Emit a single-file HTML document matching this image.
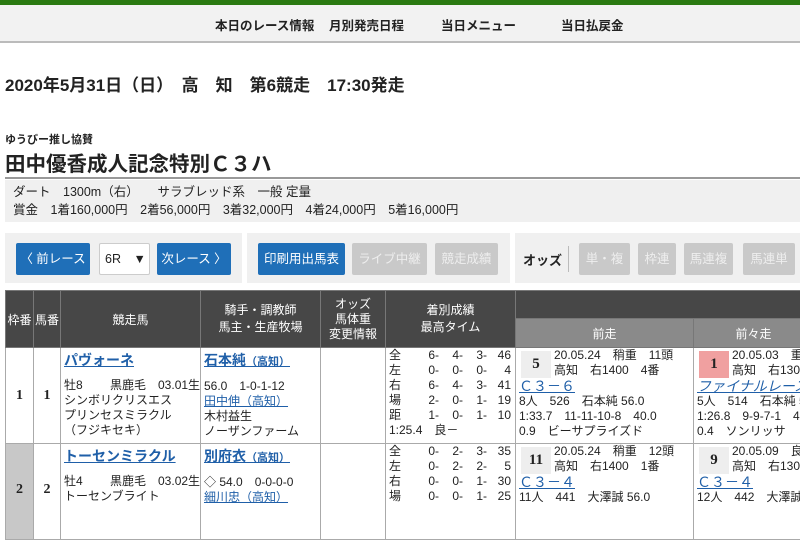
<!DOCTYPE html>
<html><head><meta charset="utf-8"><style>
*{margin:0;padding:0;box-sizing:border-box}
body{width:800px;height:500px;overflow:hidden;background:#fff;font-family:"Liberation Sans","Noto Sans CJK JP",sans-serif;color:#222;position:relative}
.a{position:absolute;white-space:nowrap}
.nav{left:0;top:5px;width:800px;height:38px;background:#f2f2f2;border-bottom:2px solid #bbb}
.nav span{position:absolute;top:10px;font-size:12.5px;font-weight:bold;color:#222}
.btn{position:absolute;top:243px;height:32px;border-radius:2px;font-size:12.5px;color:#fff;text-align:center;line-height:32px}
.b{background:#1f6fb8}
.g{background:#c9c9c9;color:#eee}
table{position:absolute;left:5px;top:290px;border-collapse:collapse;font-size:12px;table-layout:fixed;width:808px}
td,th{border:1px solid #aaa;vertical-align:top;overflow:hidden}
th{background:#474747;color:#fff;font-weight:normal;font-size:12px;text-align:center;vertical-align:middle;border-color:#777}
th.s{background:#8a8a8a;height:29px}
.c{text-align:center;vertical-align:middle;font-family:"Liberation Serif","Noto Serif CJK SC",serif;font-weight:bold;font-size:14px}
.lk{color:#1f5fa8;text-decoration:underline;font-weight:bold;font-size:14px}
.lk2{color:#1f5fa8;text-decoration:underline}
.ln{line-height:15px;padding-left:3px;white-space:nowrap}
.num{display:block;width:30px;height:27px;background:#eee;text-align:center;line-height:27px;font-family:"Liberation Serif",serif;font-weight:bold;font-size:15px;float:left;margin:3px 3px 0 2px}
.cl{clear:both;display:block;line-height:16px}
.r span{display:inline-block;width:24px;text-align:right}
.r span.k{width:28px;text-align:left}
.r span.w{width:22px}
</style></head><body>
<div class="a" style="left:0;top:0;width:800px;height:5px;background:#2b7a12"></div>
<div class="a nav"><span style="left:215px">本日のレース情報</span><span style="left:329px">月別発売日程</span><span style="left:441px">当日メニュー</span><span style="left:561px">当日払戻金</span></div>
<div class="a" style="left:5px;top:71px;font-size:17px;font-weight:bold">2020年5月31日（日）　高　知　第6競走　17:30発走</div>
<div class="a" style="left:5px;top:131px;font-size:11px;font-weight:bold">ゆうびー推し協賛</div>
<div class="a" style="left:5px;top:147px;font-size:20.5px;font-weight:bold">田中優香成人記念特別Ｃ３ハ</div>
<div class="a" style="left:5px;top:177px;width:795px;height:2px;background:#999"></div>
<div class="a" style="left:5px;top:180px;width:795px;height:42px;background:#f0f0f0;font-size:12.5px;line-height:18px;padding:3px 0 0 8px">ダート　1300m（右）　　サラブレッド系　一般 定量<br>賞金　1着160,000円　2着56,000円　3着32,000円　4着24,000円　5着16,000円</div>
<div class="a" style="left:5px;top:233px;width:237px;height:50px;background:#f0f0f0"></div>
<div class="a" style="left:247px;top:233px;width:263px;height:50px;background:#f0f0f0"></div>
<div class="a" style="left:515px;top:233px;width:285px;height:50px;background:#f0f0f0"></div>
<div class="btn b" style="left:16px;width:74px">〈 前レース</div>
<div class="btn" style="left:99px;width:51px;background:#fff;border:1px solid #ccc;color:#222;text-align:left;padding-left:5px;line-height:30px">6R　▼</div>
<div class="btn b" style="left:157px;width:74px">次レース 〉</div>
<div class="btn b" style="left:258px;width:87px">印刷用出馬表</div>
<div class="btn g" style="left:352px;width:75px">ライブ中継</div>
<div class="btn g" style="left:435px;width:63px">競走成績</div>
<div class="a" style="left:523px;top:250px;font-size:13px;font-weight:bold">オッズ</div>
<div class="a" style="left:568px;top:246px;width:1px;height:26px;background:#bbb"></div>
<div class="btn g" style="left:579px;width:51px">単・複</div>
<div class="btn g" style="left:638px;width:38px">枠連</div>
<div class="btn g" style="left:684px;width:49px">馬連複</div>
<div class="btn g" style="left:743px;width:52px">馬連単</div>
<table>
<colgroup><col style="width:28px"><col style="width:27px"><col style="width:140px"><col style="width:120px"><col style="width:65px"><col style="width:130px"><col style="width:178px"><col style="width:120px"></colgroup>
<tr><th rowspan="2" style="height:57px">枠番</th><th rowspan="2">馬番</th><th rowspan="2">競走馬</th><th rowspan="2" style="line-height:17px">騎手・調教師<br>馬主・生産牧場</th><th rowspan="2" style="line-height:15px">オッズ<br>馬体重<br>変更情報</th><th rowspan="2" style="line-height:17px">着別成績<br>最高タイム</th><th colspan="2" style="height:28px"></th></tr>
<tr><th class="s">前走</th><th class="s">前々走</th></tr>
<tr style="height:96px"><td class="c">1</td><td class="c">1</td>
<td class="ln" style="padding-top:5px"><span class="lk">パヴォーネ</span><div style="margin-top:9px">牡8　　 黒鹿毛　03.01生<br>シンボリクリスエス<br>プリンセスミラクル<br>（フジキセキ）</div></td>
<td class="ln" style="padding-top:5px"><span class="lk">石本純</span><span class="lk2" style="font-size:11px;font-weight:bold">（高知）</span><div style="margin-top:9px">56.0　1-0-1-12<br><span class="lk2">田中伸（高知）</span><br>木村益生<br>ノーザンファーム</div></td>
<td></td>
<td class="ln r"><span class="k">全</span><span class="w">6-</span><span>4-</span><span>3-</span><span>46</span><br><span class="k">左</span><span class="w">0-</span><span>0-</span><span>0-</span><span>4</span><br><span class="k">右</span><span class="w">6-</span><span>4-</span><span>3-</span><span>41</span><br><span class="k">場</span><span class="w">2-</span><span>0-</span><span>1-</span><span>19</span><br><span class="k">距</span><span class="w">1-</span><span>0-</span><span>1-</span><span>10</span><br>1:25.4　良－</td>
<td class="ln"><span class="num">5</span>20.05.24　稍重　11頭<br>高知　右1400　4番<span class="lk2 cl" style="font-size:14px">Ｃ３－６</span>8人　526　石本純 56.0<br>1:33.7　11-11-10-8　40.0<br>0.9　ビーサプライズド</td>
<td class="ln"><span class="num" style="background:#f0a0a0">1</span>20.05.03　重<br>高知　右1300<span class="lk2 cl" style="font-size:14px;font-style:italic">ファイナルレースC</span>5人　514　石本純 5<br>1:26.8　9-9-7-1　4<br>0.4　ソンリッサ</td></tr>
<tr style="height:96px"><td class="c" style="background:#c8c8c8;vertical-align:top;padding-top:38px">2</td><td class="c" style="vertical-align:top;padding-top:38px">2</td>
<td class="ln" style="padding-top:5px"><span class="lk">トーセンミラクル</span><div style="margin-top:9px">牡4　　 黒鹿毛　03.02生<br>トーセンブライト</div></td>
<td class="ln" style="padding-top:5px"><span class="lk">別府衣</span><span class="lk2" style="font-size:11px;font-weight:bold">（高知）</span><div style="margin-top:9px">◇ 54.0　0-0-0-0<br><span class="lk2">細川忠（高知）</span></div></td>
<td></td>
<td class="ln r"><span class="k">全</span><span class="w">0-</span><span>2-</span><span>3-</span><span>35</span><br><span class="k">左</span><span class="w">0-</span><span>2-</span><span>2-</span><span>5</span><br><span class="k">右</span><span class="w">0-</span><span>0-</span><span>1-</span><span>30</span><br><span class="k">場</span><span class="w">0-</span><span>0-</span><span>1-</span><span>25</span></td>
<td class="ln"><span class="num">11</span>20.05.24　稍重　12頭<br>高知　右1400　1番<span class="lk2 cl" style="font-size:14px">Ｃ３－４</span>11人　441　大澤誠 56.0</td>
<td class="ln"><span class="num">9</span>20.05.09　良<br>高知　右1300<span class="lk2 cl" style="font-size:14px">Ｃ３－４</span>12人　442　大澤誠</td></tr>
</table>
</body></html>
